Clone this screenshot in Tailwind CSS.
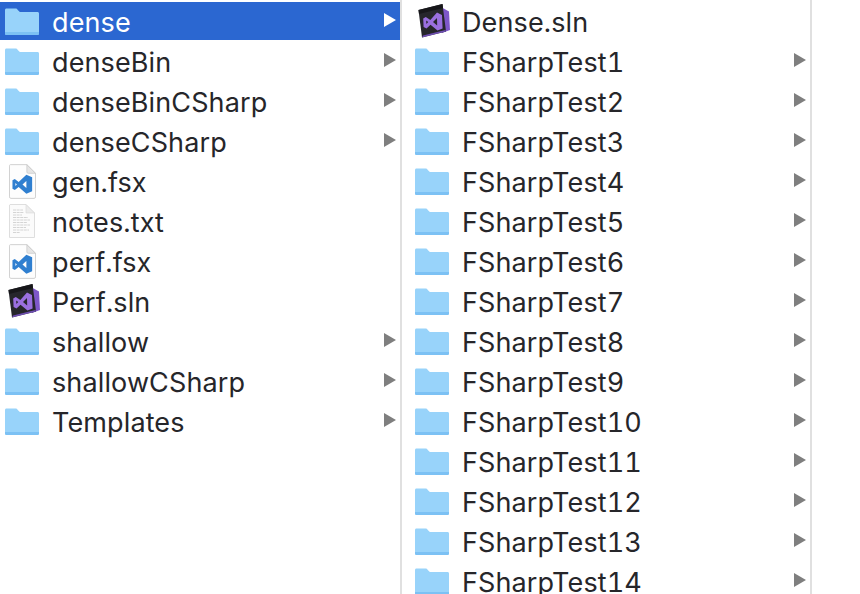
<!DOCTYPE html>
<html lang="en">
<head>
    <meta charset="UTF-8">
    <title>Finder columns</title>
    <script src="https://cdn.jsdelivr.net/npm/@tailwindcss/browser@4"></script>
</head>
<body class="bg-white">
    <svg class="hidden">
        <defs>
            <linearGradient id="folderFill" x1="0" y1="0" x2="0" y2="1">
                <stop offset="0" stop-color="#8ccdf9"/>
                <stop offset="1" stop-color="#82c6f7"/>
            </linearGradient>
        </defs>
        <symbol id="folder" viewBox="0 0 34 27">
            <path d="M1.5 0.5H10.5C11.5 0.5 12 1 12.8 1.9L14 3.2C14.5 3.8 15 4 16 4H32.5C33.4 4 34 4.6 34 5.5V25.5C34 26.4 33.4 27 32.5 27H1.5C0.6 27 0 26.4 0 25.5V2C0 1.1 0.6 0.5 1.5 0.5Z" fill="#98d3fa"/>
            <path d="M0 6.2C0 5.6 0.6 5 1.5 5H32.5C33.4 5 34 5.6 34 6.2V25.5C34 26.4 33.4 27 32.5 27H1.5C0.6 27 0 26.4 0 25.5Z" fill="url(#folderFill)"/>
            <path d="M0 24H34V25.5C34 26.4 33.4 27 32.5 27H1.5C0.6 27 0 26.4 0 25.5Z" fill="#7cc1f4"/>
        </symbol>
        <symbol id="fsx" viewBox="0 0 28 36">
            <path d="M1.5 0.5H18.5L27.5 9.5V34C27.5 34.9 26.9 35.5 26 35.5H2C1.1 35.5 0.5 34.9 0.5 34V2C0.5 1.1 0.6 0.5 1.5 0.5Z" fill="#fdfdfd" stroke="#cfcfcf"/>
            <path d="M18.5 0.5V8C18.5 9 19 9.5 20 9.5H27.5Z" fill="#e6e6e6" stroke="#c4c4c4" stroke-width="0.7"/>
            <path d="M18 11L24 13.6V28L18 30.6L10 23.8L6 26.8L3.6 25.6V16.6L6 15.4L10 18.4Z" fill="#2f7fd0"/>
            <path d="M18 17.4L14 21.1L18 24.8Z" fill="#fdfdfd"/>
            <path d="M6.6 19.6L8.2 21.1L6.6 22.6Z" fill="#fdfdfd"/>
        </symbol>
        <symbol id="txt" viewBox="0 0 26 34">
            <path d="M1 0.5H17L25.5 9V33.5H0.5V1Z" fill="#fbfbfb" stroke="#dedede"/>
            <path d="M17 0.5V9H25.5Z" fill="#ececec" stroke="#d8d8d8" stroke-width="0.6"/>
            <path d="M4 6H14M4 8.5H15M4 11H13M4 13.5H19M4 16H21M4 18.5H18M4 21H21M4 23.5H17M4 26H20M4 28.5H11" stroke="#d4d4d4" stroke-width="1" stroke-dasharray="3 0.6"/>
        </symbol>
        <symbol id="sln" viewBox="0 0 32 34">
            <path d="M23 3L31 7.5L32 26L24 29Z" fill="#7e57c9"/>
            <path d="M0.5 6L24.5 0L28 27.5L4 33.5Z" fill="#26262b"/>
            <path d="M0.5 6L24.5 0L25 4L1 10Z" fill="#17171a"/>
            <path d="M19 8.5L24 11L24.6 24.5L19.5 26.5L12.5 20.8L8.5 24.5L5.6 23L5.2 14.5L7.8 13L12.3 16Z" fill="#9a6fdf"/>
            <path d="M19 14L15 18L19.2 21.5Z" fill="#26262b"/>
            <path d="M8.2 16.6L10.2 18L8.4 20Z" fill="#26262b"/>
            <path d="M5 31.5L27.5 26L28 27.5L4 33.5Z" fill="#6f4fb3"/>
        </symbol>
        <symbol id="arrow" viewBox="0 0 12 14">
            <path d="M0 0L12 7L0 14Z"/>
        </symbol>
    </svg>

    <main class="flex h-[594px] w-[860px] overflow-hidden font-['Inter','Liberation_Sans',sans-serif] text-[27px] tracking-[0.12px] tabular-nums text-[#26262a]">
        <!-- first column -->
        <div class="w-[400px] shrink-0 pt-[2px]">
            <div class="flex h-[38px] items-center bg-[#2b67d1] pr-1 text-white">
                <svg class="ml-[5px] h-[27px] w-[34px]"><use href="#folder"/></svg>
                <span class="ml-[13px] grow pt-1">dense</span>
                <svg class="mb-[2px] h-[14px] w-3 fill-white"><use href="#arrow"/></svg>
            </div>
            <div class="flex h-10 items-center pr-1 pt-[2px]">
                <svg class="ml-[5px] h-[27px] w-[34px]"><use href="#folder"/></svg>
                <span class="ml-[13px] grow pt-1">denseBin</span>
                <svg class="mb-[2px] h-[14px] w-3 fill-[#7f7f7f]"><use href="#arrow"/></svg>
            </div>
            <div class="flex h-10 items-center pr-1 pt-[2px]">
                <svg class="ml-[5px] h-[27px] w-[34px]"><use href="#folder"/></svg>
                <span class="ml-[13px] grow pt-1">denseBinCSharp</span>
                <svg class="mb-[2px] h-[14px] w-3 fill-[#7f7f7f]"><use href="#arrow"/></svg>
            </div>
            <div class="flex h-10 items-center pr-1 pt-[2px]">
                <svg class="ml-[5px] h-[27px] w-[34px]"><use href="#folder"/></svg>
                <span class="ml-[13px] grow pt-1">denseCSharp</span>
                <svg class="mb-[2px] h-[14px] w-3 fill-[#7f7f7f]"><use href="#arrow"/></svg>
            </div>
            <div class="flex h-10 items-center pr-1 pt-[2px]">
                <svg class="ml-[9px] h-[35px] w-[27px]"><use href="#fsx"/></svg>
                <span class="ml-[16px] grow pt-1">gen.fsx</span>
            </div>
            <div class="flex h-10 items-center pr-1 pt-[2px]">
                <svg class="ml-[9px] h-[34px] w-[26px]"><use href="#txt"/></svg>
                <span class="ml-[17px] grow pt-1">notes.txt</span>
            </div>
            <div class="flex h-10 items-center pr-1 pt-[2px]">
                <svg class="ml-[9px] h-[35px] w-[27px]"><use href="#fsx"/></svg>
                <span class="ml-[16px] grow pt-1">perf.fsx</span>
            </div>
            <div class="flex h-10 items-center pr-1 pt-[2px]">
                <svg class="ml-[8px] h-[34px] w-[32px]"><use href="#sln"/></svg>
                <span class="ml-[12px] grow pt-1">Perf.sln</span>
            </div>
            <div class="flex h-10 items-center pr-1 pt-[2px]">
                <svg class="ml-[5px] h-[27px] w-[34px]"><use href="#folder"/></svg>
                <span class="ml-[13px] grow pt-1">shallow</span>
                <svg class="mb-[2px] h-[14px] w-3 fill-[#7f7f7f]"><use href="#arrow"/></svg>
            </div>
            <div class="flex h-10 items-center pr-1 pt-[2px]">
                <svg class="ml-[5px] h-[27px] w-[34px]"><use href="#folder"/></svg>
                <span class="ml-[13px] grow pt-1">shallowCSharp</span>
                <svg class="mb-[2px] h-[14px] w-3 fill-[#7f7f7f]"><use href="#arrow"/></svg>
            </div>
            <div class="flex h-10 items-center pr-1 pt-[2px]">
                <svg class="ml-[5px] h-[27px] w-[34px]"><use href="#folder"/></svg>
                <span class="ml-[13px] grow pt-1">Templates</span>
                <svg class="mb-[2px] h-[14px] w-3 fill-[#7f7f7f]"><use href="#arrow"/></svg>
            </div>
        </div>

        <!-- second column -->
        <div class="w-[412px] shrink-0 border-x-2 border-[#e0e0e0] pt-[2px]">
            <div class="flex h-[38px] items-center pr-1">
                <svg class="ml-[16px] h-[34px] w-[32px]"><use href="#sln"/></svg>
                <span class="ml-[12px] grow pt-1">Dense.sln</span>
            </div>
            <div class="flex h-10 items-center pr-1 pt-[2px]">
                <svg class="ml-[13px] h-[27px] w-[34px]"><use href="#folder"/></svg>
                <span class="ml-[13px] grow pt-1">FSharpTest1</span>
                <svg class="mb-[2px] h-[14px] w-3 fill-[#7f7f7f]"><use href="#arrow"/></svg>
            </div>
            <div class="flex h-10 items-center pr-1 pt-[2px]">
                <svg class="ml-[13px] h-[27px] w-[34px]"><use href="#folder"/></svg>
                <span class="ml-[13px] grow pt-1">FSharpTest2</span>
                <svg class="mb-[2px] h-[14px] w-3 fill-[#7f7f7f]"><use href="#arrow"/></svg>
            </div>
            <div class="flex h-10 items-center pr-1 pt-[2px]">
                <svg class="ml-[13px] h-[27px] w-[34px]"><use href="#folder"/></svg>
                <span class="ml-[13px] grow pt-1">FSharpTest3</span>
                <svg class="mb-[2px] h-[14px] w-3 fill-[#7f7f7f]"><use href="#arrow"/></svg>
            </div>
            <div class="flex h-10 items-center pr-1 pt-[2px]">
                <svg class="ml-[13px] h-[27px] w-[34px]"><use href="#folder"/></svg>
                <span class="ml-[13px] grow pt-1">FSharpTest4</span>
                <svg class="mb-[2px] h-[14px] w-3 fill-[#7f7f7f]"><use href="#arrow"/></svg>
            </div>
            <div class="flex h-10 items-center pr-1 pt-[2px]">
                <svg class="ml-[13px] h-[27px] w-[34px]"><use href="#folder"/></svg>
                <span class="ml-[13px] grow pt-1">FSharpTest5</span>
                <svg class="mb-[2px] h-[14px] w-3 fill-[#7f7f7f]"><use href="#arrow"/></svg>
            </div>
            <div class="flex h-10 items-center pr-1 pt-[2px]">
                <svg class="ml-[13px] h-[27px] w-[34px]"><use href="#folder"/></svg>
                <span class="ml-[13px] grow pt-1">FSharpTest6</span>
                <svg class="mb-[2px] h-[14px] w-3 fill-[#7f7f7f]"><use href="#arrow"/></svg>
            </div>
            <div class="flex h-10 items-center pr-1 pt-[2px]">
                <svg class="ml-[13px] h-[27px] w-[34px]"><use href="#folder"/></svg>
                <span class="ml-[13px] grow pt-1">FSharpTest7</span>
                <svg class="mb-[2px] h-[14px] w-3 fill-[#7f7f7f]"><use href="#arrow"/></svg>
            </div>
            <div class="flex h-10 items-center pr-1 pt-[2px]">
                <svg class="ml-[13px] h-[27px] w-[34px]"><use href="#folder"/></svg>
                <span class="ml-[13px] grow pt-1">FSharpTest8</span>
                <svg class="mb-[2px] h-[14px] w-3 fill-[#7f7f7f]"><use href="#arrow"/></svg>
            </div>
            <div class="flex h-10 items-center pr-1 pt-[2px]">
                <svg class="ml-[13px] h-[27px] w-[34px]"><use href="#folder"/></svg>
                <span class="ml-[13px] grow pt-1">FSharpTest9</span>
                <svg class="mb-[2px] h-[14px] w-3 fill-[#7f7f7f]"><use href="#arrow"/></svg>
            </div>
            <div class="flex h-10 items-center pr-1 pt-[2px]">
                <svg class="ml-[13px] h-[27px] w-[34px]"><use href="#folder"/></svg>
                <span class="ml-[13px] grow pt-1">FSharpTest10</span>
                <svg class="mb-[2px] h-[14px] w-3 fill-[#7f7f7f]"><use href="#arrow"/></svg>
            </div>
            <div class="flex h-10 items-center pr-1 pt-[2px]">
                <svg class="ml-[13px] h-[27px] w-[34px]"><use href="#folder"/></svg>
                <span class="ml-[13px] grow pt-1">FSharpTest11</span>
                <svg class="mb-[2px] h-[14px] w-3 fill-[#7f7f7f]"><use href="#arrow"/></svg>
            </div>
            <div class="flex h-10 items-center pr-1 pt-[2px]">
                <svg class="ml-[13px] h-[27px] w-[34px]"><use href="#folder"/></svg>
                <span class="ml-[13px] grow pt-1">FSharpTest12</span>
                <svg class="mb-[2px] h-[14px] w-3 fill-[#7f7f7f]"><use href="#arrow"/></svg>
            </div>
            <div class="flex h-10 items-center pr-1 pt-[2px]">
                <svg class="ml-[13px] h-[27px] w-[34px]"><use href="#folder"/></svg>
                <span class="ml-[13px] grow pt-1">FSharpTest13</span>
                <svg class="mb-[2px] h-[14px] w-3 fill-[#7f7f7f]"><use href="#arrow"/></svg>
            </div>
            <div class="flex h-10 items-center pr-1 pt-[2px]">
                <svg class="ml-[13px] h-[27px] w-[34px]"><use href="#folder"/></svg>
                <span class="ml-[13px] grow pt-1">FSharpTest14</span>
                <svg class="mb-[2px] h-[14px] w-3 fill-[#7f7f7f]"><use href="#arrow"/></svg>
            </div>
        </div>
    </main>
</body>
</html>
